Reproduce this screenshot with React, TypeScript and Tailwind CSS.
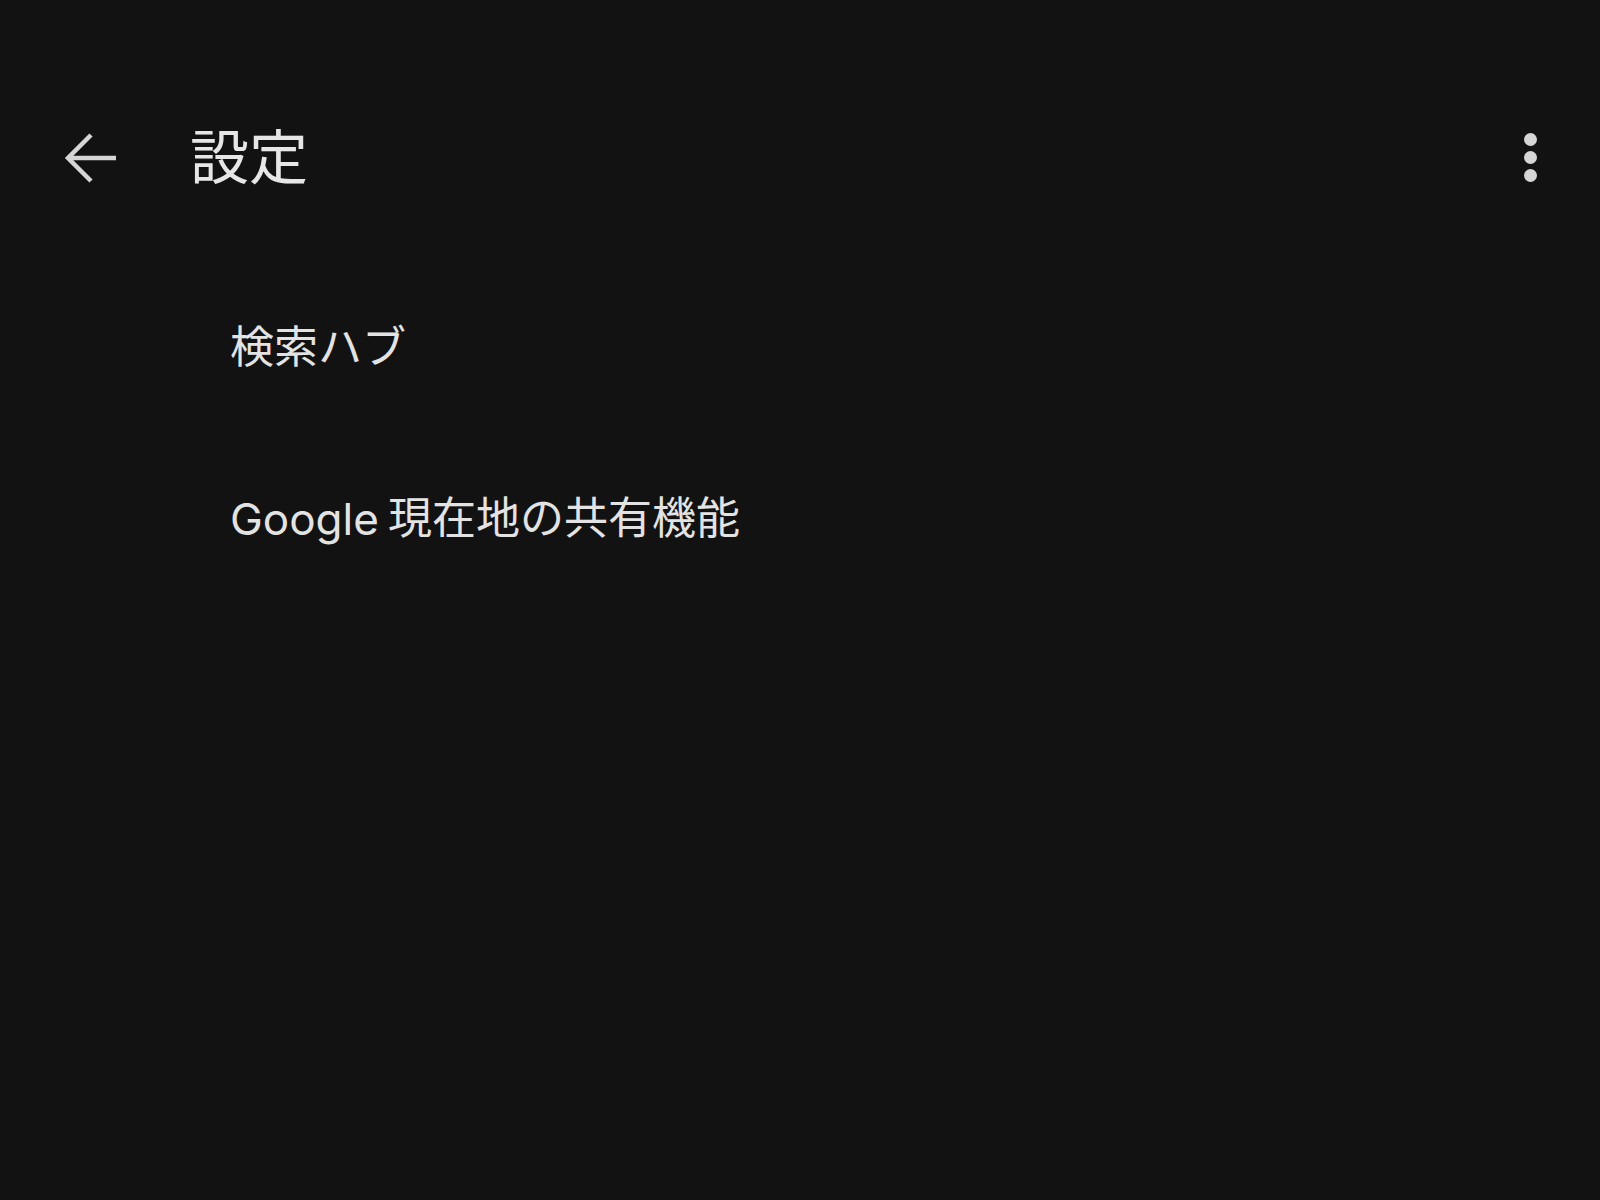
import React from "react";

export default function App() {
  const font = { fontFamily: 'Roboto, "Noto Sans CJK JP", sans-serif' };
  return (
    <div className="w-[1600px] h-[1200px] bg-[#121212] text-[#e3e3e3] overflow-hidden" style={font}>
      <div className="flex items-center h-[96px] mt-[110px] pl-[62px] pr-[63px]">
        <div className="w-[58px] h-[58px] flex items-center justify-center">
          <svg width="58" height="58" viewBox="0 0 58 58" fill="none">
            <path d="M54 29H6M29 6L6 29L29 52" stroke="#d6d6d6" strokeWidth="4.5" strokeLinecap="butt" strokeLinejoin="miter" />
          </svg>
        </div>
        <div className="ml-[70px] text-[59px] leading-none text-[#e6e6e6]">設定</div>
        <div className="ml-auto flex flex-col items-center gap-[5px] -mt-[2px]">
          <span className="block w-[13px] h-[13px] rounded-full bg-[#d6d6d6]" />
          <span className="block w-[13px] h-[13px] rounded-full bg-[#d6d6d6]" />
          <span className="block w-[13px] h-[13px] rounded-full bg-[#d6d6d6]" />
        </div>
      </div>
      <div className="flex flex-col pl-[230px] mt-[56px]">
        <div className="h-[171px] flex items-center text-[44px] leading-none">検索ハブ</div>
        <div className="h-[171px] flex items-center text-[44px] leading-none">
          <span style={{ fontFamily: 'Inter, "Noto Sans CJK JP", sans-serif' }}>Google</span>
          <span className="ml-[9px]">現在地の共有機能</span>
        </div>
      </div>
    </div>
  );
}
